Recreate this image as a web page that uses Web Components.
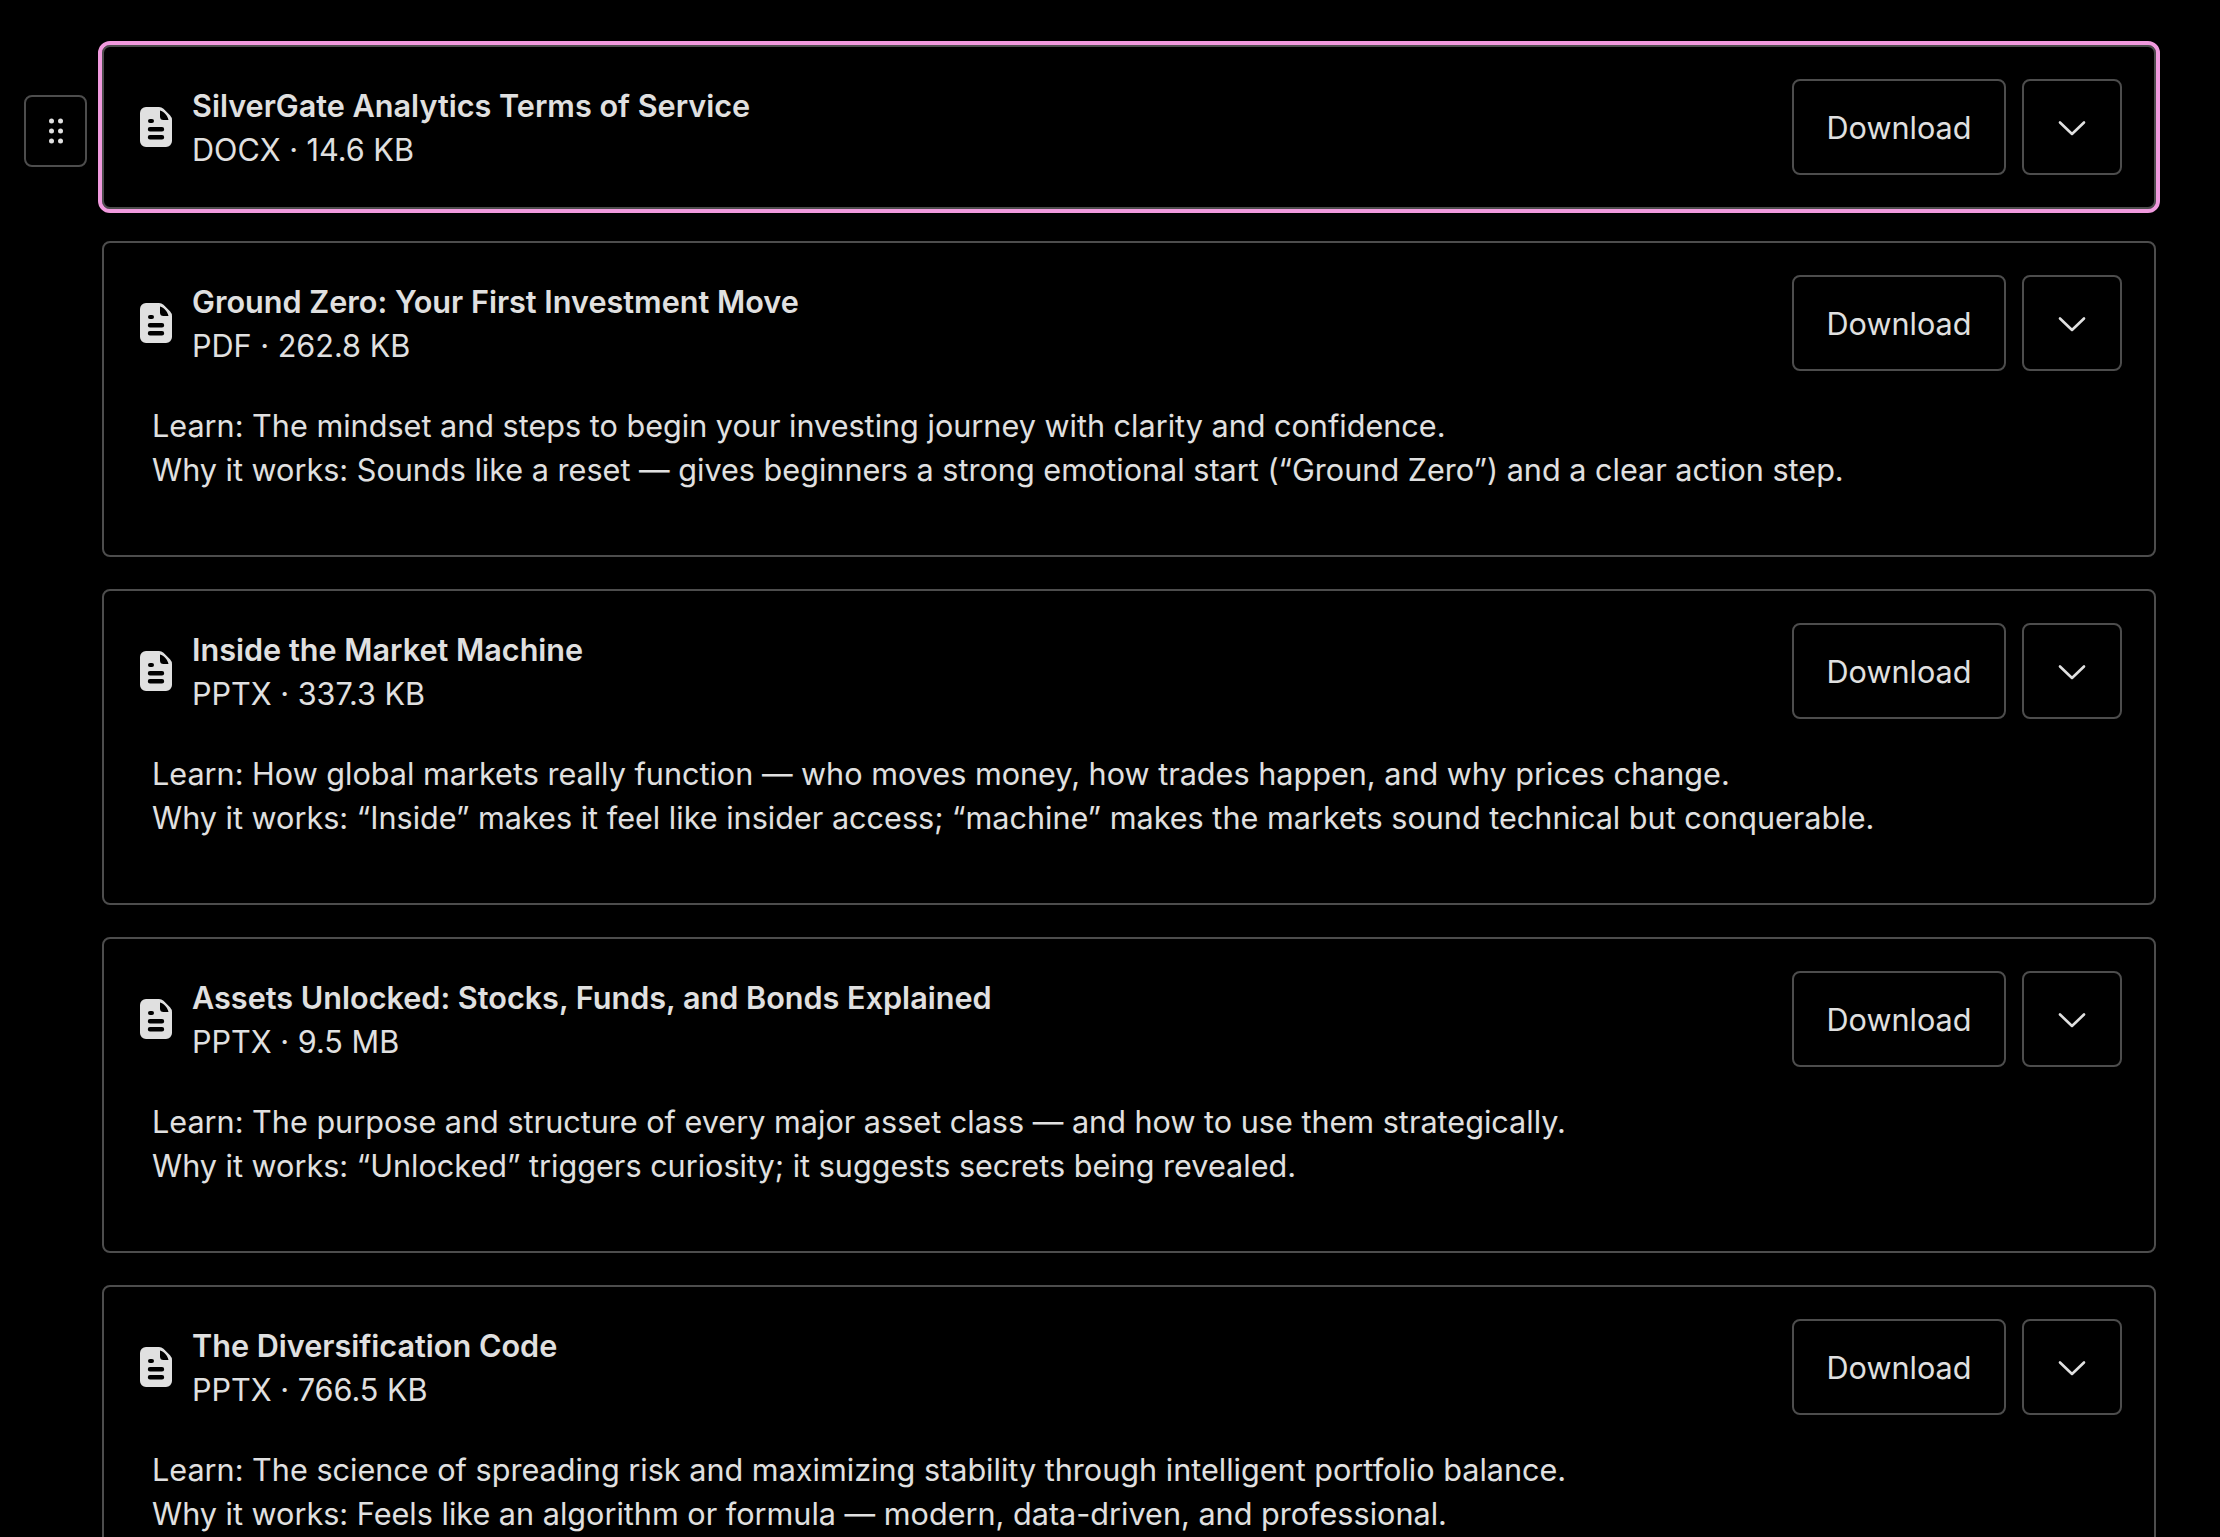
<!DOCTYPE html>
<html>
<head>
<meta charset="utf-8">
<style>
  html, body { margin: 0; height: 100%; background: #000; overflow: hidden; }
  body { font-family: Inter, "Noto Sans", sans-serif; color: #e0e0e0; }
  file-list { padding: 45px 64px 0 24px; }
</style>
</head>
<body>
<file-list>
  <file-card name="SilverGate Analytics Terms of Service" meta="DOCX · 14.6 KB" selected></file-card>
  <file-card name="Ground Zero: Your First Investment Move" meta="PDF · 262.8 KB">Learn: The mindset and steps to begin your investing journey with clarity and confidence.<br>Why it works: Sounds like a reset — gives beginners a strong emotional start (“Ground Zero”) and a clear action step.</file-card>
  <file-card name="Inside the Market Machine" meta="PPTX · 337.3 KB">Learn: How global markets really function — who moves money, how trades happen, and why prices change.<br>Why it works: “Inside” makes it feel like insider access; “machine” makes the markets sound technical but conquerable.</file-card>
  <file-card name="Assets Unlocked: Stocks, Funds, and Bonds Explained" meta="PPTX · 9.5 MB">Learn: The purpose and structure of every major asset class — and how to use them strategically.<br>Why it works: “Unlocked” triggers curiosity; it suggests secrets being revealed.</file-card>
  <file-card name="The Diversification Code" meta="PPTX · 766.5 KB">Learn: The science of spreading risk and maximizing stability through intelligent portfolio balance.<br>Why it works: Feels like an algorithm or formula — modern, data-driven, and professional.</file-card>
</file-list>
<script>
class FileList extends HTMLElement {
  constructor() {
    super();
    this.attachShadow({ mode: 'open' }).innerHTML = `
      <style>
        :host { display: flex; flex-direction: column; gap: 32px; }
      </style>
      <slot></slot>
    `;
  }
}

class FileCard extends HTMLElement {
  constructor() {
    super();
    const shadowRoot = this.attachShadow({ mode: 'open' });
    shadowRoot.appendChild(FileCard.template.content.cloneNode(true));
  }

  connectedCallback() {
    this.shadowRoot.querySelector('.name').textContent = this.getAttribute('name');
    this.shadowRoot.querySelector('.meta').textContent = this.getAttribute('meta');
    this.shadowRoot.querySelector('.descr').hidden = !this.childNodes.length;
  }
}
FileCard.template = document.createElement('template');
FileCard.template.innerHTML = `
  <style>
    :host { display: flex; align-items: flex-start; }
    .gutter { width: 78px; flex: none; display: flex; justify-content: flex-start; }
    .handle { display: none; width: 63px; height: 72px; box-sizing: border-box; margin-top: 50px; border: 2px solid #4d4d4d; border-radius: 8px; align-items: center; justify-content: center; }
    :host([selected]) .handle { display: flex; }
    .card { flex: 1; min-width: 0; box-sizing: border-box; border: 2px solid #4d4d4d; border-radius: 8px; padding: 32px 32px 63px 36px; }
    :host([selected]) .card { padding-bottom: 32px; outline: 4px solid #f19ade; outline-offset: 0; border-radius: 8px; }
    .head { display: flex; align-items: center; height: 96px; }
    .icon { width: 32px; height: 40px; flex: none; margin-right: 20px; }
    .text { flex: 1; min-width: 0; position: relative; top: 1px; }
    .name { font-size: 30.6px; font-weight: 600; line-height: 44px; }
    .meta { font-size: 30.6px; line-height: 44px; }
    .btn { height: 96px; box-sizing: border-box; border: 2px solid #4d4d4d; border-radius: 8px; display: flex; align-items: center; justify-content: center; font-size: 30.6px; padding-top: 1px; }
    .dl { width: 214px; margin-right: 16px; }
    .more { width: 100px; }
    .descr { margin: 33px 0 0 12px; font-size: 30.6px; line-height: 44px; }
    .descr[hidden] { display: none; }
  </style>
  <div class="gutter">
    <div class="handle">
      <svg width="14" height="26" viewBox="0 0 14 26" fill="#e0e0e0"><circle cx="2.500" cy="3" r="2.500"/><circle cx="11.500" cy="3" r="2.500"/><circle cx="2.500" cy="13" r="2.500"/><circle cx="11.500" cy="13" r="2.500"/><circle cx="2.500" cy="23" r="2.500"/><circle cx="11.500" cy="23" r="2.500"/></svg>
    </div>
  </div>
  <div class="card">
    <div class="head">
      <svg class="icon" viewBox="0 0 32 40"><path fill="#e0e0e0" fill-rule="evenodd" d="M6 0H19Q21.500 0 23.500 1.800L30 8.300Q32 10.500 32 13V34a6 6 0 0 1-6 6H6a6 6 0 0 1-6-6V6a6 6 0 0 1 6-6ZM20 3.500C24 4.500 27.500 8.500 28.500 13H23.500Q20 13 20 9.500ZM10 12a2 2 0 0 0 0 4h2a2 2 0 0 0 0-4ZM10 20a2.200 2.200 0 0 0 0 4.400h12a2.200 2.200 0 0 0 0-4.400ZM10 28a2.200 2.200 0 0 0 0 4.400h12a2.200 2.200 0 0 0 0-4.400Z"/></svg>
      <div class="text"><div class="name"></div><div class="meta"></div></div>
      <div class="btn dl">Download</div>
      <div class="btn more"><svg width="28" height="16" viewBox="0 0 28 16" fill="none" stroke="#e0e0e0" stroke-width="2.600" stroke-linecap="round" stroke-linejoin="round"><path d="M2 2.500 14 14 26 2.500"/></svg></div>
    </div>
    <div class="descr"><slot></slot></div>
  </div>
`;

[['file-list', FileList], ['file-card', FileCard]].forEach(([tag, cls]) => customElements.define(tag, cls));
</script>
</body>
</html>
